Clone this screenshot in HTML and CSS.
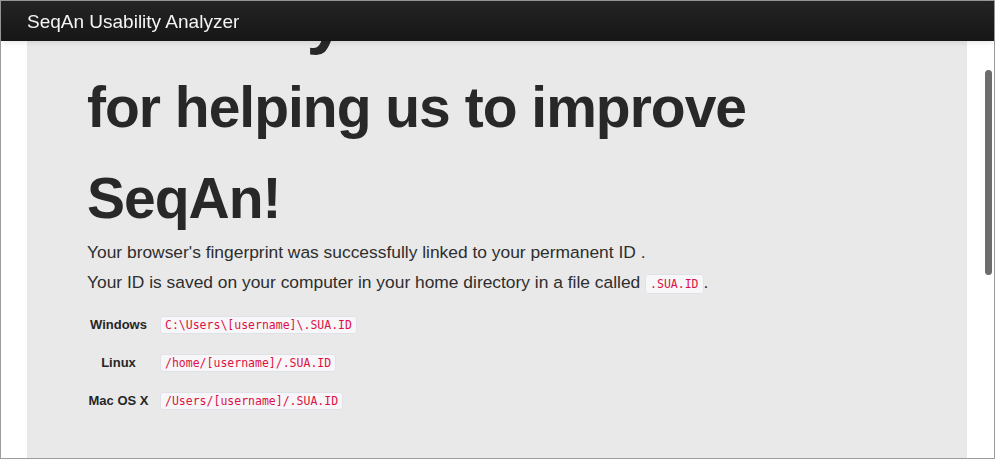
FILE: index.html
```html
<!DOCTYPE html>
<html lang="en">
<head>
<meta charset="utf-8">
<title>SeqAn Usability Analyzer</title>
<link rel="stylesheet" href="styles.css">
</head>
<body>
<header class="navbar">
  <div class="navbar-inner">
    <a class="brand" href="#">SeqAn Usability Analyzer</a>
  </div>
</header>
<main class="page">
  <section class="jumbotron">
    <h1 class="hero-title">
      <span class="hero-first">Thank you</span>
      <span class="hero-rest">for helping us to improve<br>SeqAn!</span>
    </h1>
    <p class="hero-text">Your browser's fingerprint was successfully linked to your permanent ID .<br>Your ID is saved on your computer in your home directory in a file called <code class="code">.SUA.ID</code>.</p>
    <div class="paths">
      <div class="os">Windows</div><div class="path"><code class="code">C:\Users\[username]\.SUA.ID</code></div>
      <div class="os">Linux</div><div class="path"><code class="code">/home/[username]/.SUA.ID</code></div>
      <div class="os">Mac OS X</div><div class="path"><code class="code">/Users/[username]/.SUA.ID</code></div>
    </div>
  </section>
</main>
<div class="scroll-thumb"></div>
</body>
</html>
```
FILE: styles.css
```css
html {
  height: 100%;
  overflow: hidden;
}
body {
  margin: 0;
  height: 100%;
  box-sizing: border-box;
  border: 1px solid #9c9c9c;
  overflow: hidden;
  background: #ffffff;
  font-family: "Liberation Sans", Arial, Helvetica, sans-serif;
  color: #333333;
}
.navbar {
  position: fixed;
  top: 1px;
  left: 1px;
  right: 1px;
  height: 40px;
  z-index: 10;
  background: linear-gradient(#242424, #161616);
  box-shadow: 0 1px 6px rgba(0, 0, 0, 0.12);
}
.navbar-inner {
  padding: 0 26px;
  height: 100%;
  display: flex;
  align-items: center;
}
.brand {
  color: #f4f4f4;
  text-decoration: none;
  font-size: 19px;
  line-height: 20px;
  padding-top: 1px;
}
.page {
  padding: 0 26px;
  display: flex;
}
.jumbotron {
  width: 940px;
  min-height: 600px;
  background: #e9e9e9;
  padding: 0 60px;
  box-sizing: border-box;
}
.hero-title {
  margin: -31px 0 -7px;
  font-weight: bold;
  color: #282828;
  letter-spacing: -1px;
}
.hero-first {
  display: block;
  font-size: 70px;
  line-height: 92px;
}
.hero-rest {
  display: block;
  font-size: 57px;
  line-height: 91px;
}
.hero-text {
  margin: 0;
  font-size: 17.4px;
  line-height: 30px;
  color: #2e2e2e;
}
.code {
  font-family: "DejaVu Sans Mono", "Liberation Mono", monospace;
  font-size: 11.5px;
  line-height: 1;
  color: #dd1144;
  background: #f7f7f9;
  border: 1px solid #e1e1e8;
  border-radius: 3px;
  padding: 2px 4px;
}
.paths {
  margin-top: 8px;
  display: grid;
  grid-template-columns: 63px auto;
  grid-auto-rows: 38px;
  column-gap: 10px;
  align-items: center;
  justify-items: start;
}
.os {
  justify-self: stretch;
  text-align: center;
  font-weight: bold;
  font-size: 13px;
  color: #262626;
}
.path .code {
  display: inline-block;
  line-height: 12px;
}
.scroll-thumb {
  position: fixed;
  top: 70px;
  right: 3px;
  width: 7px;
  height: 205px;
  border-radius: 4px;
  background: #6d6d6d;
  z-index: 20;
}
```
